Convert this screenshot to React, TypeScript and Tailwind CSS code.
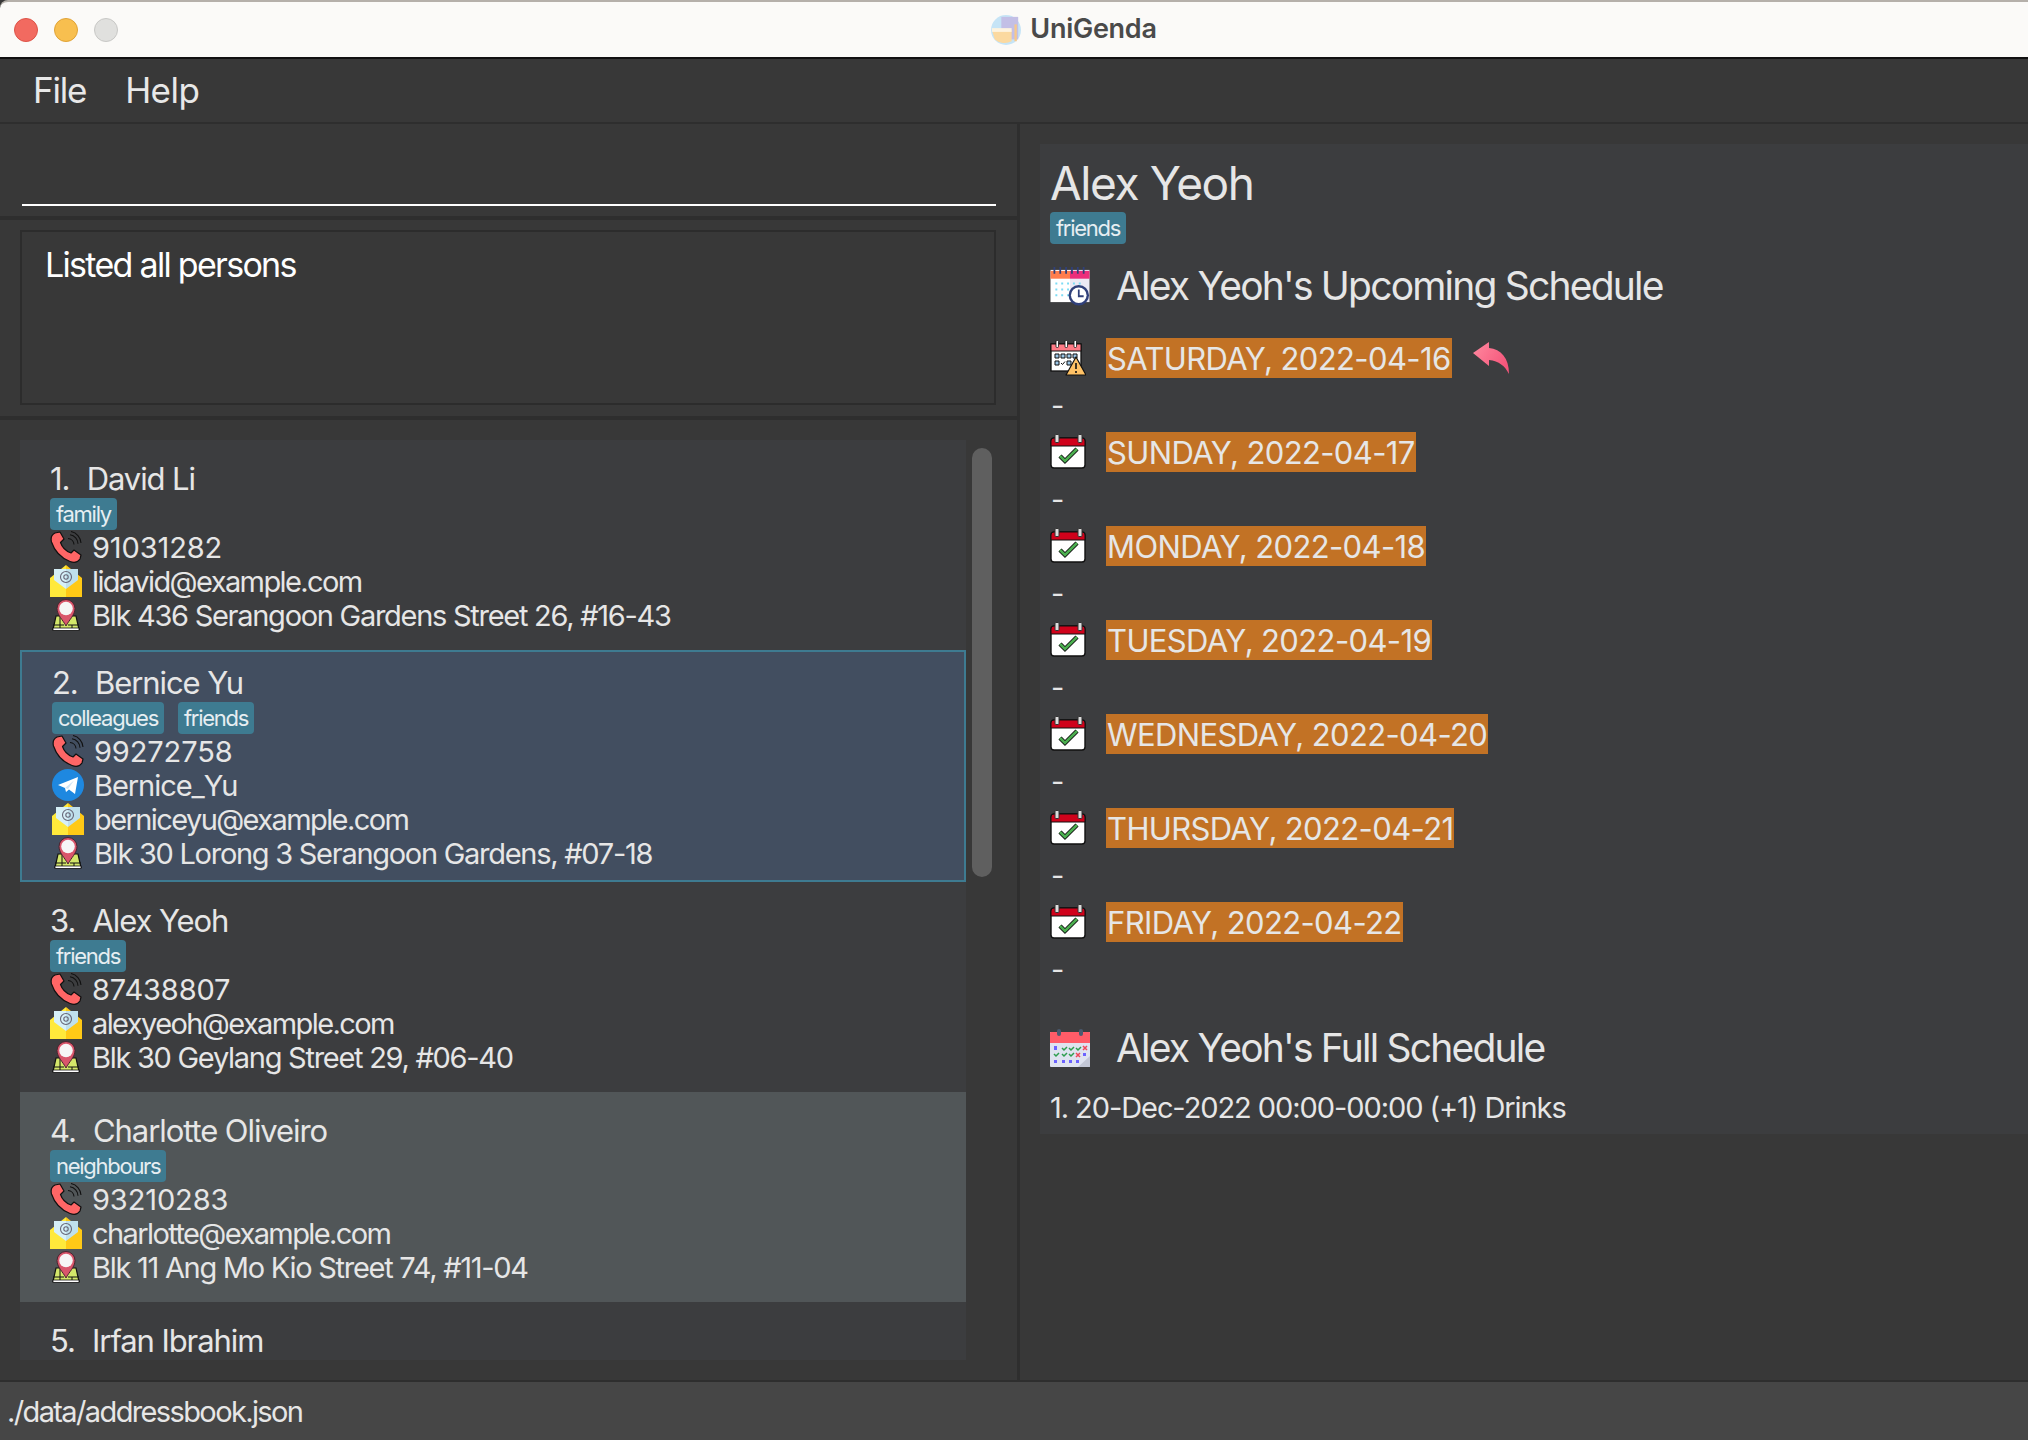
function PhoneIcon() {
  return (
    <svg viewBox="0 0 32 32" className="w-8 h-8 shrink-0">
      <path d="M5 2 L10 1 L14 8 L10.500 11.500 C12 16 15.500 20 21 22 L24 19 L31 24 L30 28 C28 31 24 32 20 30.500 C11 27 4.500 20 1.500 11 C0.500 7 2 3.500 5 2Z" fill="#ff6666" stroke="#111" strokeWidth="1.200" strokeLinejoin="round" />
      <path d="M18 7.500 a6.500 6.500 0 0 1 6 6 M20 3.800 a9 9 0 0 1 8 9 M21 0.500 a12.500 12.500 0 0 1 10 11.500" fill="none" stroke="#111" strokeWidth="1.100" />
    </svg>
  );
}

function MailIcon() {
  return (
    <svg viewBox="0 0 32 32" className="w-8 h-8 shrink-0">
      <path d="M16 0 L32 13 V32 H16Z" fill="#ffc916" />
      <path d="M16 0 L0 13 V32 H16Z" fill="#ffe93b" />
      <path d="M4 4 H16 V24 L4 15Z" fill="#d6f0f8" />
      <path d="M28 4 H16 V24 L28 15Z" fill="#bfe0ec" />
      <circle cx="16" cy="12" r="5.500" fill="none" stroke="#667" strokeWidth="1.100" />
      <circle cx="16" cy="12" r="2.200" fill="none" stroke="#667" strokeWidth="1.100" />
    </svg>
  );
}

function PinIcon() {
  return (
    <svg viewBox="0 0 32 32" className="w-8 h-8 shrink-0">
      <path d="M6 17 H26 L29 30.500 H3Z" fill="#d4e76a" stroke="#111" strokeWidth="1.200" />
      <path d="M3 26 H14 M18 26 H29 M10 17 V30 M22 26 V30" stroke="#111" strokeWidth="1" />
      <rect x="3" y="29" width="26" height="2.400" fill="#fff" stroke="#111" strokeWidth="0.800" />
      <path d="M16 27 C13 21 7 16 7 9.500 A9 9 0 0 1 25 9.500 C25 16 19 21 16 27Z" fill="#d9566b" stroke="#4a2530" strokeWidth="1" />
      <circle cx="16" cy="9.500" r="6.800" fill="#f6f6f6" />
    </svg>
  );
}

function TelegramIcon() {
  return (
    <svg viewBox="0 0 32 32" className="w-8 h-8 shrink-0">
      <circle cx="16" cy="16" r="16" fill="#1e88e0" />
      <path d="M6 16 L26 8 L23 25 L17 20.500 L14 23 L13 19Z" fill="#fff" />
      <path d="M13 19 L22 11.500 L16 20Z" fill="#cfe3f5" />
    </svg>
  );
}

function DoneCalendar() {
  return (
    <svg viewBox="0 0 36 36" className="w-9 h-9 shrink-0">
      <rect x="1" y="4" width="34" height="30" rx="3" fill="#fff" stroke="#111" strokeWidth="1.400" />
      <path d="M1 12 V7 a3 3 0 0 1 3-3 H32 a3 3 0 0 1 3 3 V12Z" fill="#d0021b" stroke="#111" strokeWidth="1" />
      <rect x="5" y="0.500" width="4" height="8" rx="1" fill="#ddd" stroke="#333" />
      <rect x="28" y="0.500" width="4" height="8" rx="1" fill="#ddd" stroke="#333" />
      <path d="M10 22 L15 27 L27 15" fill="none" stroke="#111" strokeWidth="4.400" />
      <path d="M10 22 L15 27 L27 15" fill="none" stroke="#4caf50" strokeWidth="2.600" />
    </svg>
  );
}

function WarnCalendar() {
  return (
    <svg viewBox="0 0 36 36" className="w-9 h-9 shrink-0">
      <rect x="1" y="4" width="30" height="27" fill="#fff" stroke="#111" strokeWidth="1.300" />
      <rect x="1" y="4" width="30" height="7" fill="#ff7b86" stroke="#111" strokeWidth="1" />
      <rect x="6" y="0.500" width="2.500" height="7" rx="1" fill="#fff" stroke="#111" strokeWidth="0.800" />
      <rect x="15" y="0.500" width="2.500" height="7" rx="1" fill="#fff" stroke="#111" strokeWidth="0.800" />
      <rect x="24" y="0.500" width="2.500" height="7" rx="1" fill="#fff" stroke="#111" strokeWidth="0.800" />
      <path d="M5 14h4v4H5Z M11 14h4v4h-4Z M17 14h4v4h-4Z M23 14h4v4h-4Z M5 21h4v4H5Z M17 21h4v4h-4Z" fill="#9cc7e8" stroke="#111" strokeWidth="1" />
      <path d="M11 23 l1.500 1.500 l2.500-3" fill="none" stroke="#111" strokeWidth="1" />
      <path d="M26 17 L36 35 H16Z" fill="#ffc266" stroke="#111" strokeWidth="1.200" strokeLinejoin="round" />
      <path d="M26 23 V29 M26 31 V33" stroke="#111" strokeWidth="1.600" />
    </svg>
  );
}

function UpcomingIcon() {
  return (
    <svg viewBox="0 0 40 40" className="w-10 h-[39px] shrink-0">
      <rect x="0" y="3" width="20" height="33" fill="#fff" />
      <rect x="20" y="3" width="20" height="33" fill="#ece9f4" />
      <rect x="0" y="4" width="20" height="8" fill="#ff7d4d" />
      <rect x="20" y="4" width="20" height="8" fill="#ec2f7b" />
      <path d="M4 0v7 M10 0v7 M16 0v7 M22 0v7 M28 0v7 M34 0v7" stroke="#30407a" strokeWidth="1.800" />
      <path d="M5 16h2v2H5Z M11 16h2v2h-2Z M17 16h2v2h-2Z M23 16h2v2h-2Z M29 16h2v2h-2Z M5 22h2v2H5Z M11 22h2v2h-2Z M17 22h2v2h-2Z M23 22h2v2h-2Z M5 28h2v2H5Z M11 28h2v2h-2Z M17 28h2v2h-2Z" fill="#7cdcf5" />
      <circle cx="29" cy="29" r="10.500" fill="#30407a" />
      <circle cx="29" cy="29" r="8" fill="#fff" />
      <path d="M29 23v7h5" fill="none" stroke="#30407a" strokeWidth="1.800" />
    </svg>
  );
}

function FullIcon() {
  return (
    <svg viewBox="0 0 40 38" className="w-10 h-[38px] shrink-0">
      <rect x="0" y="3" width="40" height="35" rx="1" fill="#dfe3f0" />
      <path d="M40 27 V37 a1 1 0 0 1-1 1 H28Z" fill="#c3c7d6" />
      <path d="M0 14 V4 a1 1 0 0 1 1-1 H39 a1 1 0 0 1 1 1 V14Z" fill="#ff5c68" />
      <rect x="7" y="0" width="4" height="7" rx="2" fill="#4a5a70" />
      <rect x="29" y="0" width="4" height="7" rx="2" fill="#4a5a70" />
      <path d="M4 17h3v4H4Z M33 24h3v3h-3Z M4 31h3v3H4Z M12 31h3v3h-3Z M19 31h3v3h-3Z M26 31h3v3h-3Z" fill="#6c63ff" />
      <path d="M12 19l2 2 3-3 M19 19l2 2 3-3 M26 19l2 2 3-3 M4 25l2 2 3-3 M12 25l2 2 3-3 M19 25l2 2 3-3" fill="none" stroke="#2e9e4f" strokeWidth="1.500" />
      <path d="M33 17l4 4 M37 17l-4 4 M26 24l4 4 M30 24l-4 4" stroke="#f0485a" strokeWidth="1.500" />
    </svg>
  );
}

function ReplyIcon() {
  return (
    <svg viewBox="0 0 36 32" className="w-9 h-8 shrink-0">
      <defs>
        <linearGradient id="rg" x1="0" y1="0" x2="1" y2="0.600">
          <stop offset="0" stopColor="#ff8aa0" />
          <stop offset="1" stopColor="#f5557a" />
        </linearGradient>
      </defs>
      <path d="M0 11 L16 0 V6 C28 7 36 16 36 32 C32 24 26 19 16 18 V24Z" fill="url(#rg)" />
    </svg>
  );
}

function LogoIcon() {
  return (
    <svg viewBox="0 0 32 32" className="w-[30px] h-[30px] shrink-0">
      <circle cx="16" cy="16" r="16" fill="#c6e4f6" />
      <path d="M11 2 H29 V26 H11Z" fill="#c3bfe6" />
      <path d="M1 16 H22 V28 A16 16 0 0 1 4 26Z" fill="#fbd9a0" />
      <rect x="1" y="14" width="21" height="4" fill="#fdf3e0" />
      <rect x="25" y="10" width="2.500" height="18" fill="#f7c88a" />
    </svg>
  );
}

function Tag({ label }: { label: string }) {
  return <span className="h-8 px-[6px] rounded bg-[#3e7b91] text-[#e6eef2] text-[22px] leading-8 tracking-[-0.058em]">{label}</span>;
}

function Row({ icon, text, tracking }: { icon: React.ReactNode; text: string; tracking: string }) {
  return (
    <div className={`h-[34px] flex items-center gap-[10px] text-[29px] ${tracking}`}>
      {icon}
      <span className="pt-[2px]">{text}</span>
    </div>
  );
}

interface Person {
  name: string;
  tags?: string[];
  phone?: string;
  telegram?: string;
  email?: string;
  address?: string;
}

const people: Person[] = [
  { name: 'David Li', tags: ['family'], phone: '91031282', email: 'lidavid@example.com', address: 'Blk 436 Serangoon Gardens Street 26, #16-43' },
  { name: 'Bernice Yu', tags: ['colleagues', 'friends'], phone: '99272758', telegram: 'Bernice_Yu', email: 'berniceyu@example.com', address: 'Blk 30 Lorong 3 Serangoon Gardens, #07-18' },
  { name: 'Alex Yeoh', tags: ['friends'], phone: '87438807', email: 'alexyeoh@example.com', address: 'Blk 30 Geylang Street 29, #06-40' },
  { name: 'Charlotte Oliveiro', tags: ['neighbours'], phone: '93210283', email: 'charlotte@example.com', address: 'Blk 11 Ang Mo Kio Street 74, #11-04' },
  { name: 'Irfan Ibrahim' },
];

function PersonCard({ person, index }: { person: Person; index: number }) {
  const selected = index === 1;
  const bg = selected ? 'bg-[#424e60] border-2 border-[#3e7b91] pl-[30px] py-[10px]' : index === 3 ? 'bg-[#515658] pl-[30px] py-[18px]' : 'pl-[30px] py-[18px]';
  return (
    <div className={`shrink-0 ${bg}`}>
      <div className="h-10 flex items-center pt-[2px] text-[31px] tracking-[-0.035em] whitespace-pre">
        <span className="mr-[2px]">{index + 1}.{'  '}</span>
        <span>{person.name}</span>
      </div>
      {person.tags && (
        <div className="flex gap-[14px] h-8">
          {person.tags.map((t) => (
            <Tag key={t} label={t} />
          ))}
        </div>
      )}
      {person.phone && <Row icon={<PhoneIcon />} text={person.phone} tracking="tracking-[-0.004em]" />}
      {person.telegram && <Row icon={<TelegramIcon />} text={person.telegram} tracking="tracking-[-0.036em]" />}
      {person.email && <Row icon={<MailIcon />} text={person.email} tracking="tracking-[-0.055em]" />}
      {person.address && <Row icon={<PinIcon />} text={person.address} tracking="tracking-[-0.044em]" />}
    </div>
  );
}

const upcoming = [
  'SATURDAY, 2022-04-16',
  'SUNDAY, 2022-04-17',
  'MONDAY, 2022-04-18',
  'TUESDAY, 2022-04-19',
  'WEDNESDAY, 2022-04-20',
  'THURSDAY, 2022-04-21',
  'FRIDAY, 2022-04-22',
];

function DayRow({ label, index }: { label: string; index: number }) {
  return (
    <div>
      <div className="h-10 flex items-center">
        <div className="w-[56px]">{index === 0 ? <WarnCalendar /> : <DoneCalendar />}</div>
        <span className="h-10 leading-[42px] px-[1px] bg-[#c27225] text-[31px] tracking-[-0.02em]">{label}</span>
        {index === 0 && (
          <div className="ml-[21px]">
            <ReplyIcon />
          </div>
        )}
      </div>
      <div className="h-[54px] leading-[56px] pl-[1px] text-[29px]">-</div>
    </div>
  );
}

export default function App() {
  return (
    <div className="w-[2028px] h-[1440px] overflow-hidden flex flex-col bg-[#383838] text-[#e6e6e6] font-['Inter',sans-serif]">
      {/* title bar */}
      <div className="h-[59px] shrink-0 relative flex items-center justify-center gap-[9px] pl-[120px] bg-[#fbfaf8] border-t-2 border-t-[#b5b0aa] border-b-2 border-b-[#111] rounded-tl-lg">
        <div className="absolute left-[14px] top-[16px] flex gap-[16px]">
          <div className="w-6 h-6 rounded-full bg-[#f26a60] border border-[#dd5348]" />
          <div className="w-6 h-6 rounded-full bg-[#f8bf4f] border border-[#e0a337]" />
          <div className="w-6 h-6 rounded-full bg-[#e0e0de] border border-[#c8c8c6]" />
        </div>
        <LogoIcon />
        <span className="text-[27px] font-semibold text-[#4a4a4a] tracking-[-0.01em]">UniGenda</span>
      </div>

      {/* menu */}
      <div className="h-[65px] shrink-0 flex items-center gap-[39px] pl-[33px] border-b-2 border-[#2e2e2e] text-[35px] tracking-[-0.035em] text-[#e8e8e8]">
        <span>File</span>
        <span className="tracking-[-0.015em]">Help</span>
      </div>

      <div className="flex-1 min-h-0 flex">
        {/* left column */}
        <div className="w-[1017px] shrink-0 flex flex-col">
          <div className="h-[92px] shrink-0 flex items-end pb-[10px] pl-[22px] pr-[21px]">
            <div className="w-full h-[2px] bg-white" />
          </div>
          <div className="h-1 shrink-0 bg-[#2e2e2e]" />
          <div className="h-[196px] shrink-0 pt-[10px] pl-[20px] pr-[21px]">
            <div className="h-[175px] border-2 border-[#2c2c2c] pl-[23px] pt-[7px] text-white text-[34px] tracking-[-0.05em]">Listed all persons</div>
          </div>
          <div className="h-1 shrink-0 bg-[#2e2e2e]" />
          <div className="flex-1 min-h-0 pt-[20px] pl-[20px] pb-[20px] flex">
            <div className="w-[946px] h-full overflow-hidden flex flex-col bg-[#3c3d3f]">
              {people.map((p, i) => (
                <PersonCard key={p.name} person={p} index={i} />
              ))}
            </div>
            <div className="ml-[6px] mt-[8px] w-5 h-[429px] rounded-[10px] bg-[#5f5f5f]" />
          </div>
        </div>

        {/* right column */}
        <div className="flex-1 flex border-l-[3px] border-[#2e2e2e] pt-5 pl-5 items-start">
          <div className="w-full h-[990px] bg-[#3c3d3f] pl-[10px] pt-[10px]">
            <div className="h-[58px] flex items-center text-[46px] tracking-[-0.03em]">Alex Yeoh</div>
            <div className="flex h-8">
              <Tag label="friends" />
            </div>
            <div className="mt-[22px] h-10 flex items-center gap-[26px] text-[39px] tracking-[-0.046em]">
              <UpcomingIcon />
              <span>Alex Yeoh's Upcoming Schedule</span>
            </div>
            <div className="mt-[32px]">
              {upcoming.map((d, i) => (
                <DayRow key={d} label={d} index={i} />
              ))}
            </div>
            <div className="mt-[32px] h-10 flex items-center gap-[26px] text-[39px] tracking-[-0.046em]">
              <FullIcon />
              <span>Alex Yeoh's Full Schedule</span>
            </div>
            <div className="mt-[20px] h-10 flex items-center text-[29px] tracking-[-0.037em]">1. 20-Dec-2022 00:00-00:00 (+1) Drinks</div>
          </div>
        </div>
      </div>

      {/* status bar */}
      <div className="h-[60px] shrink-0 flex items-center pl-[7px] pt-[1px] bg-[#464646] border-t-2 border-[#2e2e2e] text-[29px] tracking-[-0.056em]">./data/addressbook.json</div>
    </div>
  );
}
